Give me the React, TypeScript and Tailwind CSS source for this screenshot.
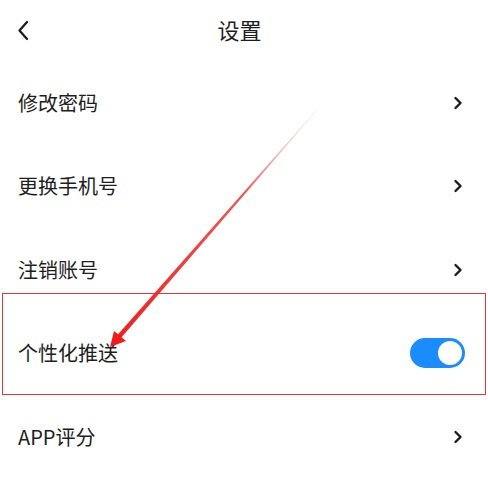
import { useState } from 'react'

const rows = [
  { label: '修改密码', type: 'link' },
  { label: '更换手机号', type: 'link' },
  { label: '注销账号', type: 'link' },
  { label: '个性化推送', type: 'switch' },
  { label: 'APP评分', type: 'link' },
]

function ChevronRight() {
  return (
    <svg width="10" height="14" viewBox="0 0 10 14" fill="none">
      <path d="M2.5 2 L7.5 7 L2.5 12" stroke="#1c1c1c" strokeWidth="2.4" strokeLinecap="round" strokeLinejoin="round" />
    </svg>
  )
}

function Toggle({ on, onChange }: { on: boolean; onChange: () => void }) {
  return (
    <button
      onClick={onChange}
      className={`flex h-[30px] w-[55px] items-center rounded-full px-[3px] ${on ? 'justify-end bg-[#1a8cff]' : 'justify-start bg-gray-300'}`}
    >
      <span className="h-[24px] w-[24px] rounded-full bg-white" />
    </button>
  )
}

export default function App() {
  const [push, setPush] = useState(true)

  return (
    <div
      className="relative h-[502px] w-[488px] overflow-hidden bg-white text-[#1e1e1e]"
      style={{ fontFamily: '"Noto Sans CJK SC", "Noto Sans", sans-serif' }}
    >
      <header className="relative flex h-[61px] items-center justify-center">
        <button className="absolute left-[13px] top-[16px] p-1">
          <svg width="12" height="21" viewBox="0 0 12 21" fill="none">
            <path d="M10 2 L2.5 10.5 L10 19" stroke="#1c1c1c" strokeWidth="2.3" strokeLinecap="round" strokeLinejoin="round" />
          </svg>
        </button>
        <h1 className="mr-[9px] mt-[-2px] text-[22px] font-normal">设置</h1>
      </header>

      {rows.map((row) => (
        <div key={row.label} className="flex h-[83.5px] items-center justify-between pl-[18px] pr-[25px]">
          <span className="text-[20px] leading-none">{row.label}</span>
          {row.type === 'switch' ? (
            <div className="mr-[-2px]">
              <Toggle on={push} onChange={() => setPush(!push)} />
            </div>
          ) : (
            <ChevronRight />
          )}
        </div>
      ))}

      {/* annotation box */}
      <div className="pointer-events-none absolute left-[2px] top-[293px] h-[102px] w-[484px] border border-[#e53935]" />

      {/* annotation arrow */}
      <svg className="pointer-events-none absolute left-0 top-0" width="488" height="502" viewBox="0 0 488 502">
        <defs>
          <linearGradient id="arr" x1="318" y1="108" x2="112" y2="346" gradientUnits="userSpaceOnUse">
            <stop offset="0" stopColor="#f3c4c4" stopOpacity="0.2" />
            <stop offset="0.35" stopColor="#e44" stopOpacity="0.9" />
            <stop offset="1" stopColor="#f01c1c" />
          </linearGradient>
        </defs>
        <polygon points="318,108 318.6,108.6 120.5,338.5 117,335.5" fill="url(#arr)" />
        <polygon points="110,347 114,331 126,341" fill="#f01c1c" />
      </svg>
    </div>
  )
}
